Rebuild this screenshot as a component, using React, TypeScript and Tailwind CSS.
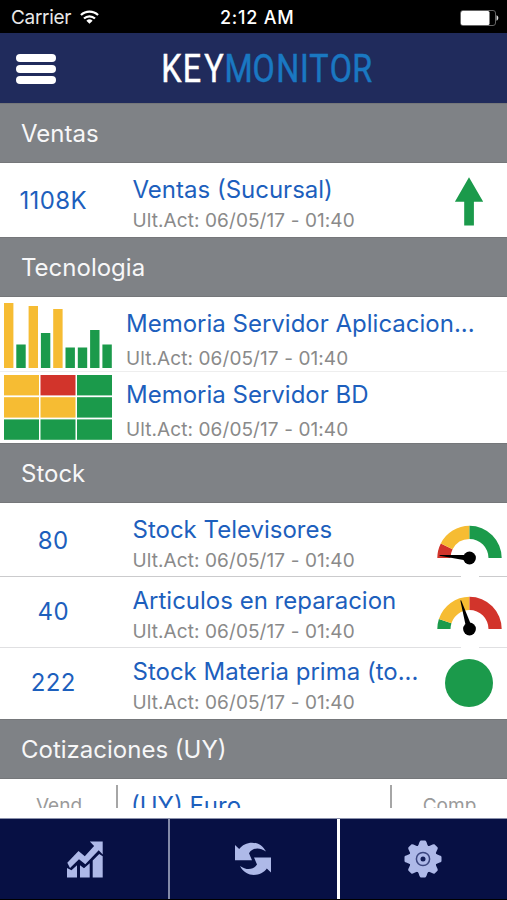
import type { ReactNode } from "react";
import clsx from "clsx";

const GREEN = "#1b9a4b";
const YELLOW = "#f6bc33";
const RED = "#d2342b";

const UPDATED = "Ult.Act: 06/05/17 - 01:40";

const Wifi = () => (
  <svg className="ml-[9px] mt-[-1px]" width="19" height="15" viewBox="0 0 20 15">
    <path d="M1 4.9a13 13 0 0 1 18 0" fill="none" stroke="#fff" strokeWidth="2.3" />
    <path d="M4.2 8.6a8.4 8.4 0 0 1 11.6 0" fill="none" stroke="#fff" strokeWidth="2.3" />
    <path d="M10 14.2 6.7 11a4.8 4.8 0 0 1 6.6 0Z" fill="#fff" />
  </svg>
);

const Battery = () => (
  <svg className="ml-auto" width="39" height="16" viewBox="0 0 39 16">
    <rect x="0.5" y="0.5" width="35" height="15" rx="2.5" fill="none" stroke="#666" />
    <rect x="1" y="1" width="28.5" height="14" rx="1.5" fill="#fff" />
    <path d="M36.5 5.3c2.4.8 2.4 4.6 0 5.4Z" fill="#ddd" />
  </svg>
);

const StatusBar = () => (
  <div className="flex h-[33px] items-center bg-black pl-[11px] pr-[8px] pt-[3px] text-white">
    <div className="flex w-[209px] items-center">
      <span className="text-[19px] leading-6 tracking-[-0.3px] text-[#e8e8e8]">Carrier</span>
      <Wifi />
    </div>
    <span className="text-[18px] font-medium leading-6 tracking-[0.75px]">2:12 AM</span>
    <Battery />
  </div>
);

const Header = () => (
  <header className="flex h-[70px] items-center bg-[#202b5c] pl-4">
    <button className="mt-[1px] flex w-10 flex-col gap-[3px]" aria-label="Menu">
      <span className="h-[8px] rounded-full bg-white" />
      <span className="h-[8px] rounded-full bg-white" />
      <span className="h-[8px] rounded-full bg-white" />
    </button>
    <svg
      className="ml-[105px]"
      width="220"
      height="56"
      viewBox="0 0 220 56"
      fontFamily="Roboto, sans-serif"
      fontSize="38"
      strokeWidth="0.5"
    >
      <g transform="scale(0.85 1)">
        <text x="0.3 25.6 51" y="42" fill="#fff" stroke="#fff">
          KEY
        </text>
        <text x="74.8 107.8 135.6 163.4 174.5 198.4 225.1" y="42" fill="#1a78c2" stroke="#1a78c2">
          MONITOR
        </text>
      </g>
    </svg>
  </header>
);

const Section = ({ title }: { title: string }) => (
  <h2 className="flex h-[60px] items-center border-y border-[#75777a] bg-[#7f8286] pl-[21px] pt-[1px] text-[24px] leading-7 text-[#f7f7f8]">
    {title}
  </h2>
);

const UpArrow = () => (
  <svg width="30" height="50" viewBox="0 0 30 50">
    <path d="M15 1.3 29.2 25.7h-9.3v23.8h-9.7V25.7H.9Z" fill={GREEN} />
  </svg>
);

// Point on a circle, angle in degrees counted clockwise from the left end
const polar = (r: number, deg: number) => {
  const a = (deg * Math.PI) / 180;
  return `${(33.5 - r * Math.cos(a)).toFixed(2)} ${(33 - r * Math.sin(a)).toFixed(2)}`;
};

const arc = (from: number, to: number) =>
  `M${polar(32.2, from)}A32.2 32.2 0 0 1 ${polar(32.2, to)}L${polar(19, to)}A19 19 0 0 0 ${polar(19, from)}Z`;

interface GaugeProps {
  stops: { to: number; color: string }[];
  needle: number;
}

const Gauge = ({ stops, needle }: GaugeProps) => (
  <svg width="66" height="56" viewBox="0 0 66 56">
    <path d="M25 46h18v10H25Z" fill="#fff" />
    {stops.map((s, i) => (
      <path key={s.to} d={arc(i ? stops[i - 1].to : 0, s.to)} fill={s.color} />
    ))}
    <path d="M3.5 32.6 33.5 30v6L3.5 33.4Z" fill="#000" transform={`rotate(${needle} 33.5 33)`} />
    <circle cx="33.5" cy="33" r="6.4" fill="#000" />
  </svg>
);

const Dot = () => <span className="size-12 rounded-full bg-[#1b9a4b]" />;

const bars = [
  { h: 65, c: YELLOW },
  { h: 23.5, c: GREEN },
  { h: 62, c: YELLOW },
  { h: 35, c: GREEN },
  { h: 59, c: YELLOW },
  { h: 20.5, c: GREEN },
  { h: 20.5, c: GREEN },
  { h: 38, c: GREEN },
  { h: 23.5, c: GREEN },
];

const BarChart = () => (
  <svg className="-mt-px" width="108" height="65" viewBox="0 0 108 65">
    {bars.map((b, i) => (
      <rect key={i} x={i * 12.3} y={65 - b.h} width="9.4" height={b.h} fill={b.c} />
    ))}
  </svg>
);

const cells = [YELLOW, RED, GREEN, YELLOW, YELLOW, GREEN, GREEN, GREEN, GREEN];

const HeatMap = () => (
  <svg width="108" height="65" viewBox="0 0 108 65">
    {cells.map((c, i) => (
      <rect key={i} x={(i % 3) * 36.5} y={Math.floor(i / 3) * 22.2} width="35" height="20.4" fill={c} />
    ))}
  </svg>
);

interface RowProps {
  title: string;
  value?: string;
  indicator?: ReactNode;
  chart?: ReactNode;
  border?: string;
}

const Row = ({ title, value, indicator, chart, border }: RowProps) => (
  <div className={clsx("flex h-[71px] border-b", border ?? "border-transparent")}>
    {chart ? (
      <div className="w-[126px] pl-1 pt-[3px]">{chart}</div>
    ) : (
      <div className="w-[132.5px] pr-[26px] pt-[21px] text-center text-[24px] leading-7 tracking-[0.4px] text-[#1d5fbd]">
        {value}
      </div>
    )}
    <div className={clsx("flex-1 whitespace-nowrap", chart ? "pt-[9px]" : "pt-[10px]")}>
      <div className="text-[24px] leading-7 text-[#1d5fbd]">{title}</div>
      <div
        className={clsx("text-[19px] leading-6 tracking-[0.09px] text-[#8a8a8a]", chart ? "mt-[9px]" : "mt-[5px]")}
      >
        {UPDATED}
      </div>
    </div>
    {indicator && <div className="flex h-[74px] w-[76px] shrink-0 justify-center">{indicator}</div>}
  </div>
);

const ChartIcon = () => (
  <svg width="37" height="37" viewBox="66 840.5 37 37" fill="#aeb9e8">
    <path d="M67 867.5l4.5 2.3 5.5-5V877H67ZM80 864.8l4 3 5.7-5V877H80ZM92.7 860l6.5-6.6 3.5 2.4V877h-10Z" />
    <path d="M67.3 862.3 78.5 850.5l6.3 5.3 9.3-10.3-4.3-4.5h12.9v13l-4-4.2-13.4 14-6.3-5-9 8.8Z" />
  </svg>
);

const half = "M1 3 5.2 7C11-1.3 26-2.5 32 9.6 25.5 5 18.5 5.5 15 11.2L18 18.2H1Z";

const RefreshIcon = () => (
  <svg width="38" height="34" viewBox="0 0 38 34" fill="#aeb9e8">
    <path d={half} />
    <path d={half} transform="rotate(180 19 16.8)" />
  </svg>
);

const GearIcon = () => (
  <svg width="38" height="38" viewBox="-19 -19 38 38">
    <circle r="14" fill="#aeb9e8" />
    {[0, 45, 90, 135, 180, 225, 270, 315].map((a) => (
      <path
        key={a}
        d="M-6.5-11.5C-3.8-13-4-18.5-2-18.5H2C4-18.5 3.8-13 6.5-11.5Z"
        transform={`rotate(${a})`}
        fill="#aeb9e8"
      />
    ))}
    <circle r="6.6" fill="none" stroke="#3b467f" strokeWidth="1.5" />
    <circle r="2.5" fill="#141f57" />
  </svg>
);

const TabBar = () => (
  <nav className="flex h-[82px] border-b border-t border-b-black border-t-[#8a90ab] bg-[#071044]">
    <button className="flex w-[170px] items-center justify-center border-r-2 border-[#838aa8]" aria-label="Indicadores">
      <ChartIcon />
    </button>
    <button
      className="flex w-[170px] items-center justify-center border-r-[3px] border-white pr-[1px]"
      aria-label="Actualizar"
    >
      <RefreshIcon />
    </button>
    <button className="flex flex-1 items-center justify-center pr-[2px]" aria-label="Ajustes">
      <GearIcon />
    </button>
  </nav>
);

export default function App() {
  return (
    <div className="flex h-[900px] w-[507px] flex-col overflow-hidden bg-white font-['Inter',sans-serif]">
      <StatusBar />
      <Header />
      <main className="h-[705px] overflow-hidden">
        <Section title="Ventas" />
        <div className="pt-[3px]">
          <Row
            title="Ventas (Sucursal)"
            value="1108K"
            indicator={
              <div className="pt-[10px]">
                <UpArrow />
              </div>
            }
          />
        </div>
        <Section title="Tecnologia" />
        <div className="pt-[4px]">
          <Row title="Memoria Servidor Aplicacion..." chart={<BarChart />} border="border-[#eeeeee]" />
          <Row title="Memoria Servidor BD" chart={<HeatMap />} />
        </div>
        <Section title="Stock" />
        <div className="pt-[3px]">
          <Row
            title="Stock Televisores"
            value="80"
            border="border-[#cbcbcd]"
            indicator={
              <div className="pt-[19px]">
                <Gauge
                  needle={5}
                  stops={[
                    { to: 27, color: RED },
                    { to: 90, color: YELLOW },
                    { to: 180, color: GREEN },
                  ]}
                />
              </div>
            }
          />
          <Row
            title="Articulos en reparacion"
            value="40"
            border="border-[#e0e0e2]"
            indicator={
              <div className="pt-[19px]">
                <Gauge
                  needle={73}
                  stops={[
                    { to: 18, color: GREEN },
                    { to: 90, color: YELLOW },
                    { to: 180, color: RED },
                  ]}
                />
              </div>
            }
          />
          <Row
            title="Stock Materia prima (to..."
            value="222"
            indicator={
              <div className="flex pt-[11px]">
                <Dot />
              </div>
            }
          />
        </div>
        <Section title="Cotizaciones (UY)" />
        <div className="flex h-[71px] pt-[6px] text-[19px] leading-6 text-[#9a9a9a]">
          <div className="w-[118px] border-r-2 border-[#a6a6a6] pl-[2px] pt-[9px] text-center">Vend</div>
          <div className="w-[274px] border-r-2 border-[#a6a6a6] pl-[13px] pt-[7px] text-[24px] leading-7 text-[#1d5fbd]">
            (UY) Euro
          </div>
          <div className="flex-1 pt-[9px] text-center">Comp</div>
        </div>
      </main>
      <div className="h-[10px] bg-white" />
      <TabBar />
    </div>
  );
}
